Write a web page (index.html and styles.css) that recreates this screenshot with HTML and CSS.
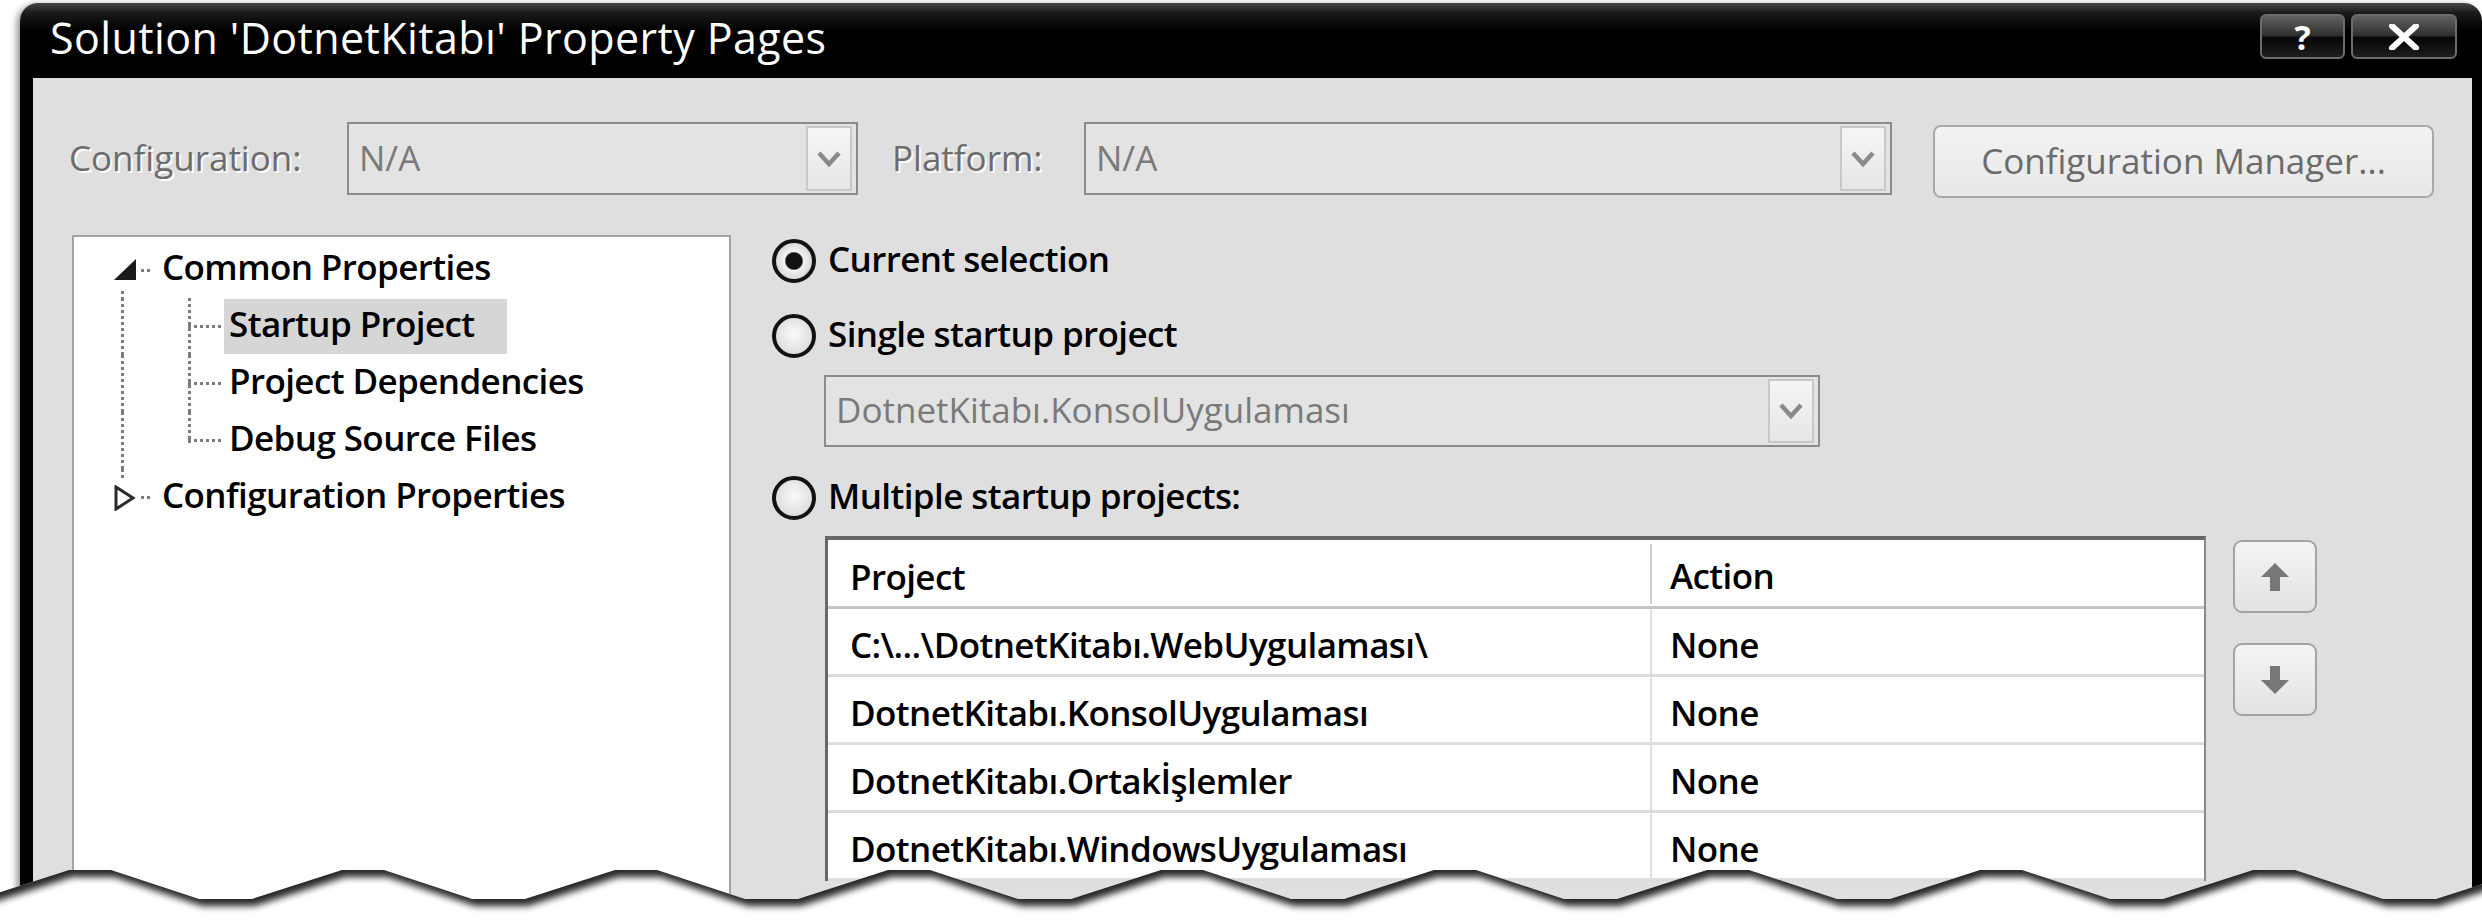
FILE: index.html
```html
<!DOCTYPE html>
<html lang="tr">
<head>
<meta charset="utf-8">
<title>Solution 'DotnetKitabı' Property Pages</title>
<link rel="stylesheet" href="styles.css">
</head>
<body>
<div class="window">
  <div class="titlebar">
    <div class="title">Solution 'DotnetKitabı' Property Pages</div>
    <div class="caption-btns">
      <div class="cap-btn help">?</div>
      <div class="cap-btn close">
        <svg width="34" height="26" viewBox="0 0 34 26"><path d="M5 2 L29 24 M29 2 L5 24" stroke="#fff" stroke-width="6" stroke-linecap="round"/></svg>
      </div>
    </div>
  </div>
  <div class="client">
    <div class="config-row">
      <div class="dis-label lbl-config">Configuration:</div>
      <div class="combo combo-config">
        <span class="combo-text">N/A</span>
        <span class="combo-btn"><svg width="24" height="16" viewBox="0 0 24 16"><path d="M2 2 L12 13 L22 2" fill="none" stroke="#8a8a8a" stroke-width="4.5"/></svg></span>
      </div>
      <div class="dis-label lbl-platform">Platform:</div>
      <div class="combo combo-platform">
        <span class="combo-text">N/A</span>
        <span class="combo-btn"><svg width="24" height="16" viewBox="0 0 24 16"><path d="M2 2 L12 13 L22 2" fill="none" stroke="#8a8a8a" stroke-width="4.5"/></svg></span>
      </div>
      <div class="cfg-mgr">Configuration Manager...</div>
    </div>
    <div class="main">
      <div class="tree">
        <div class="tnode root open">
          <span class="exp"><svg width="22" height="21" viewBox="0 0 22 21"><polygon points="22,0 22,21 0,21" fill="#1a1a1a"/></svg></span>
          <span class="tlabel">Common Properties</span>
        </div>
        <div class="tnode child"><span class="tlabel sel">Startup Project</span></div>
        <div class="tnode child"><span class="tlabel">Project Dependencies</span></div>
        <div class="tnode child last"><span class="tlabel">Debug Source Files</span></div>
        <div class="tnode root closed">
          <span class="exp"><svg width="22" height="26" viewBox="0 0 22 26"><polygon points="2,2 19,13 2,24" fill="#fff" stroke="#2a2a2a" stroke-width="3" stroke-linejoin="miter"/></svg></span>
          <span class="tlabel">Configuration Properties</span>
        </div>
      </div>
      <div class="startup">
        <div class="radio-row r1"><span class="radio checked"></span><span class="rlabel">Current selection</span></div>
        <div class="radio-row r2"><span class="radio"></span><span class="rlabel">Single startup project</span></div>
        <div class="combo combo-single">
          <span class="combo-text">DotnetKitabı.KonsolUygulaması</span>
          <span class="combo-btn"><svg width="24" height="16" viewBox="0 0 24 16"><path d="M2 2 L12 13 L22 2" fill="none" stroke="#8a8a8a" stroke-width="4.5"/></svg></span>
        </div>
        <div class="radio-row r3"><span class="radio"></span><span class="rlabel">Multiple startup projects:</span></div>
        <div class="multi">
          <div class="grid">
            <div class="grid-head"><div class="c1">Project</div><div class="c2">Action</div></div>
            <div class="grid-row"><div class="c1">C:\...\DotnetKitabı.WebUygulaması\</div><div class="c2">None</div></div>
            <div class="grid-row"><div class="c1">DotnetKitabı.KonsolUygulaması</div><div class="c2">None</div></div>
            <div class="grid-row"><div class="c1">DotnetKitabı.Ortakİşlemler</div><div class="c2">None</div></div>
            <div class="grid-row"><div class="c1">DotnetKitabı.WindowsUygulaması</div><div class="c2">None</div></div>
          </div>
          <div class="move-btns">
            <div class="mbtn"><svg width="32" height="32" viewBox="0 0 32 32"><polygon points="16,2 30,16 21,16 21,30 11,30 11,16 2,16" fill="#777"/></svg></div>
            <div class="mbtn"><svg width="32" height="32" viewBox="0 0 32 32"><polygon points="16,30 30,16 21,16 21,2 11,2 11,16 2,16" fill="#777"/></svg></div>
          </div>
        </div>
      </div>
    </div>
  </div>
</div>
<svg class="torn" width="2482" height="83" viewBox="0 840 2482 83">
  <defs>
    <clipPath id="below">
      <polygon points="-204,870 -162,870 -74,899 -21,899 69,870 111,870 199,899 252,899 342,870 384,870 472,899 525,899 615,870 657,870 745,899 798,899 888,870 930,870 1018,899 1071,899 1161,870 1203,870 1291,899 1344,899 1434,870 1476,870 1564,899 1617,899 1707,870 1749,870 1837,899 1890,899 1980,870 2022,870 2110,899 2163,899 2253,870 2295,870 2383,899 2436,899 2526,870 2568,870 2568,960 -204,960"/>
    </clipPath>
    <filter id="soft" x="-5%" y="-20%" width="110%" height="140%">
      <feGaussianBlur stdDeviation="3.5"/>
    </filter>
  </defs>
  <g clip-path="url(#below)">
    <rect x="0" y="840" width="2482" height="83" fill="#fff"/>
    <polygon transform="translate(3,7)" filter="url(#soft)" fill="#000" opacity="0.85" points="-204,870 -162,870 -74,899 -21,899 69,870 111,870 199,899 252,899 342,870 384,870 472,899 525,899 615,870 657,870 745,899 798,899 888,870 930,870 1018,899 1071,899 1161,870 1203,870 1291,899 1344,899 1434,870 1476,870 1564,899 1617,899 1707,870 1749,870 1837,899 1890,899 1980,870 2022,870 2110,899 2163,899 2253,870 2295,870 2383,899 2436,899 2526,870 2568,870 2568,780 -204,780"/>
  </g>
</svg>
</body>
</html>
```

FILE: styles.css
```css
* { box-sizing: border-box; }
html, body { margin: 0; padding: 0; }
body {
  width: 2482px;
  height: 923px;
  overflow: hidden;
  position: relative;
  background: #fff;
  font-family: "Open Sans", "Noto Sans", sans-serif;
  font-size: 35px;
  font-weight: 600;
  letter-spacing: -0.6px;
  color: #000;
}
:root {
  --vdots: repeating-linear-gradient(to bottom, #7c7c7c 0 3px, transparent 3px 6px);
  --hdots: repeating-linear-gradient(to right, #7c7c7c 0 3px, transparent 3px 6px);
}

/* window frame */
.window {
  margin: 3px 0 0 20px;
  width: 2462px;
  padding: 0 10px 0 13px;
  background: linear-gradient(#474747 0, #1a1a1a 10px, #000 28px);
  border-radius: 18px 18px 0 0;
  box-shadow: -3px 2px 7px rgba(0, 0, 0, 0.45);
}
.titlebar {
  height: 75px;
  display: flex;
  justify-content: space-between;
  align-items: flex-start;
  padding: 0 15px 0 17px;
}
.title {
  color: #fff;
  font-size: 43px;
  font-weight: 400;
  line-height: 69px;
  letter-spacing: 0.4px;
  white-space: nowrap;
}
.caption-btns { display: flex; gap: 6px; margin-top: 11px; }
.cap-btn {
  height: 45px;
  border: 2px solid #6c6c6c;
  border-radius: 6px;
  background: linear-gradient(#616161, #303030 47%, #060606 53%, #1e1e1e);
  display: flex;
  align-items: center;
  justify-content: center;
  color: #fff;
  font-weight: 700;
  letter-spacing: 0;
}
.help { width: 85px; font-size: 34px; line-height: 1; }
.close { width: 106px; }

/* client area */
.client { height: 860px; background: #dfdfdf; }
.config-row { display: flex; align-items: flex-start; padding: 44px 0 0 36px; }
.dis-label {
  height: 73px;
  line-height: 71px;
  color: #6c6c6c;
  font-weight: 400;
  letter-spacing: 0;
  text-shadow: 2px 2px 0 #fbfbfb;
  white-space: nowrap;
}
.lbl-config { width: 278px; }
.lbl-platform { width: 192px; margin-left: 34px; }
.combo {
  height: 73px;
  border: 2px solid #8b8b8b;
  background: #e3e3e3;
  display: flex;
  align-items: center;
  justify-content: space-between;
  padding: 0 4px 0 10px;
}
.combo-config { width: 511px; }
.combo-platform { width: 808px; }
.combo-text { color: #7a7a7a; font-weight: 400; letter-spacing: 0; white-space: nowrap; margin-bottom: 3px; }
.combo-btn {
  width: 46px;
  align-self: stretch;
  margin: 2px 0;
  border: 2px solid #c8c8c8;
  background: linear-gradient(#f5f5f5, #e6e6e6);
  display: flex;
  align-items: center;
  justify-content: center;
}
.cfg-mgr {
  width: 501px;
  height: 73px;
  margin: 3px 0 0 41px;
  padding-bottom: 3px;
  border: 2px solid #a9a9a9;
  border-radius: 8px;
  background: linear-gradient(#f2f2f2, #e8e8e8);
  color: #6b6b6b;
  font-weight: 400;
  letter-spacing: 0;
  display: flex;
  align-items: center;
  justify-content: center;
  white-space: nowrap;
}

/* main area */
.main { display: flex; align-items: flex-start; margin-top: 37px; padding-left: 39px; }

.tree {
  width: 659px;
  height: 700px;
  flex: none;
  background: #fff;
  border: 2px solid #a3a3a3;
  padding-top: 4px;
}
.tnode {
  height: 57px;
  display: flex;
  align-items: center;
  white-space: nowrap;
  background-repeat: no-repeat;
}
.root { padding-left: 40px; }
.exp { width: 22px; display: flex; align-items: center; margin-right: 26px; }
.exp svg { display: block; }
.root.open {
  background-image: var(--hdots), var(--vdots);
  background-position: 67px 28px, 47px 50px;
  background-size: 12px 3px, 3px 7px;
}
.root.closed {
  background-image: var(--hdots), var(--vdots);
  background-position: 67px 27px, 47px 0;
  background-size: 12px 3px, 3px 11px;
}
.child {
  padding-left: 150px;
  background-image: var(--vdots), var(--vdots), var(--hdots);
  background-position: 47px 0, 114px 0, 114px 27px;
  background-size: 3px 100%, 3px 100%, 33px 3px;
}
.child.last { background-size: 3px 100%, 3px 31px, 33px 3px; }
.tlabel { height: 55px; line-height: 49px; padding: 0 18px 0 5px; }
.child .tlabel { padding-left: 5px; }
.root .tlabel { padding-left: 0; }
.sel { background: #d6d6d6; width: 283px; }

.startup { margin-left: 41px; flex: 1; }
.radio-row { display: flex; align-items: center; gap: 12px; height: 44px; white-space: nowrap; }
.rlabel { margin-bottom: 6px; }
.r1 { margin-top: 4px; }
.r2 { margin-top: 31px; }
.r3 { margin-top: 29px; }
.radio {
  width: 44px;
  height: 44px;
  flex: none;
  border-radius: 50%;
  border: 4px solid #121212;
  background: radial-gradient(circle at 50% 45%, #fafafa, #d2d2d2);
}
.radio.checked {
  background: radial-gradient(circle, #111 0 8px, #f3f3f3 9.5px, #d2d2d2 20px);
}
.combo-single { width: 996px; height: 72px; margin: 17px 0 0 52px; }

.multi { display: flex; align-items: flex-start; margin: 16px 0 0 53px; }
.grid {
  width: 1381px;
  flex: none;
  background: #fff;
  border-top: 4px solid #686868;
  border-left: 3px solid #686868;
  border-right: 2px solid #8a8a8a;
}
.grid-head, .grid-row { display: flex; }
.grid-head { height: 69px; border-bottom: 3px solid #c4c4c4; }
.grid-row { height: 68px; border-bottom: 3px solid #dcdcdc; }
.c1 {
  width: 822px;
  padding: 6px 0 0 22px;
  display: flex;
  align-items: center;
  white-space: nowrap;
}
.c2 {
  flex: 1;
  padding: 6px 0 0 18px;
  display: flex;
  align-items: center;
  border-left: 2px solid #e0e0e0;
}
.grid-head .c2 { border-left-color: #cfcfcf; margin: 4px 8px 2px 0; padding-top: 2px; }

.move-btns { display: flex; flex-direction: column; gap: 30px; margin: 4px 0 0 27px; }
.mbtn {
  width: 84px;
  height: 73px;
  border: 2px solid #a3a3a3;
  border-radius: 9px;
  background: linear-gradient(#f4f4f4, #e3e3e3);
  display: flex;
  align-items: center;
  justify-content: center;
}

/* torn paper edge overlay */
.torn { position: absolute; left: 0; top: 840px; width: 2482px; height: 83px; display: block; }
```
